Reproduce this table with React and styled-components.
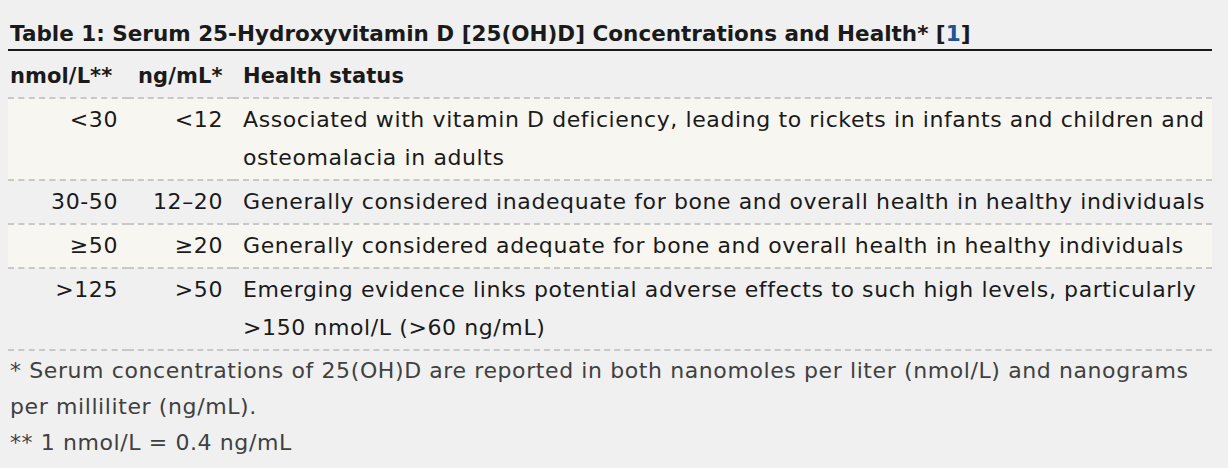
import React from "react";
import styled, { createGlobalStyle } from "styled-components";

const GlobalStyle = createGlobalStyle`
  html, body {
    margin: 0;
    padding: 0;
    background: #f0f0f0;
  }
  body {
    font-family: "DejaVu Sans", "Noto Sans", sans-serif;
    color: #1a1a1a;
  }
`;

const Page = styled.div`
  padding: 0 16px 0 8px;
  width: 1204px;
`;

const Table = styled.table`
  width: 100%;
  border-collapse: collapse;
  font-size: 22px;
  letter-spacing: 0.6px;
  line-height: 38px;
`;

const Caption = styled.caption`
  text-align: left;
  font-weight: bold;
  font-size: 21.5px;
  letter-spacing: 0;
  line-height: 31px;
  padding: 18px 2px 0;
  border-bottom: 2px solid #1a1a1a;
`;

const HeadCell = styled.th`
  text-align: left;
  font-weight: bold;
  font-size: 21px;
  letter-spacing: 0.1px;
  white-space: nowrap;
  width: ${(p) => (p.$w ? `${p.$w}px` : "auto")};
  padding: 6px 10px 2px 10px;
  border-bottom: 2px dashed #c8c8c8;
  &:first-child {
    padding-left: 2px;
  }
  &:last-child {
    padding-right: 2px;
  }
`;

const Row = styled.tr`
  background: ${(p) => (p.$striped ? "#f8f6f0" : "transparent")};
`;

const Cell = styled.td`
  vertical-align: top;
  text-align: ${(p) => (p.$num ? "right" : "left")};
  white-space: ${(p) => (p.$num ? "nowrap" : "normal")};
  padding: 2px 10px;
  border-bottom: 2px dashed #c8c8c8;
  &:first-child {
    padding-left: 2px;
  }
  &:last-child {
    padding-right: 2px;
  }
`;

const RefLink = styled.a`
  color: #205493;
  text-decoration: none;
`;

const Notes = styled.div`
  color: #404040;
  font-size: 22px;
  letter-spacing: 0.6px;
  line-height: 36px;
  padding: 2px 2px 0;
`;

const NoteLine = styled.div``;

const rows = [
  {
    nmol: "<30",
    ng: "<12",
    status:
      "Associated with vitamin D deficiency, leading to rickets in infants and children and osteomalacia in adults",
  },
  {
    nmol: "30-50",
    ng: "12\u201320",
    status:
      "Generally considered inadequate for bone and overall health in healthy individuals",
  },
  {
    nmol: "\u226550",
    ng: "\u226520",
    status:
      "Generally considered adequate for bone and overall health in healthy individuals",
  },
  {
    nmol: ">125",
    ng: ">50",
    status:
      "Emerging evidence links potential adverse effects to such high levels, particularly >150 nmol/L (>60 ng/mL)",
  },
];

export default function App() {
  return (
    <Page>
      <GlobalStyle />
      <Table>
        <Caption>
          Table 1: Serum 25-Hydroxyvitamin D [25(OH)D] Concentrations and
          Health* [<RefLink href="#ref1">1</RefLink>]
        </Caption>
        <thead>
          <tr>
            <HeadCell $w={108}>nmol/L**</HeadCell>
            <HeadCell $w={85}>ng/mL*</HeadCell>
            <HeadCell>Health status</HeadCell>
          </tr>
        </thead>
        <tbody>
          {rows.map((r, i) => (
            <Row key={r.nmol} $striped={i % 2 === 0}>
              <Cell $num>{r.nmol}</Cell>
              <Cell $num>{r.ng}</Cell>
              <Cell>{r.status}</Cell>
            </Row>
          ))}
        </tbody>
      </Table>
      <Notes>
        <NoteLine>
          * Serum concentrations of 25(OH)D are reported in both nanomoles per
          liter (nmol/L) and nanograms per milliliter (ng/mL).
        </NoteLine>
        <NoteLine>** 1 nmol/L = 0.4 ng/mL</NoteLine>
      </Notes>
    </Page>
  );
}
